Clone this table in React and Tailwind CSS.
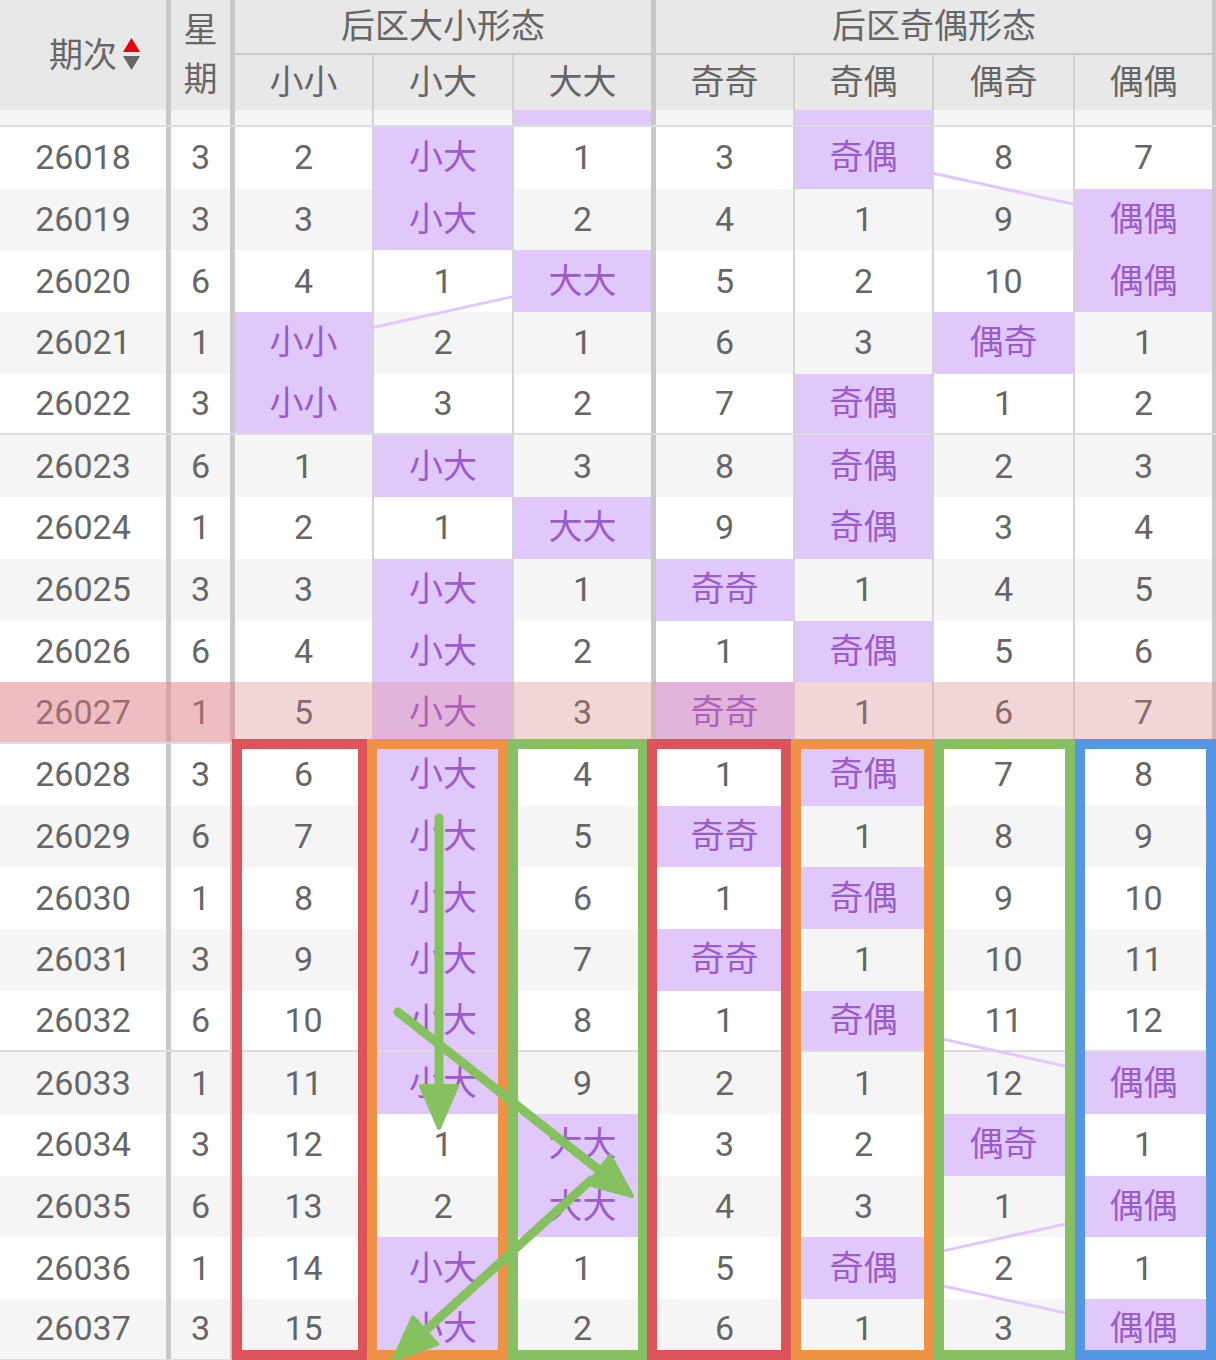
import React from 'react';
import clsx from 'clsx';

const ROW_H = 61.7;
const BODY_TOP = 127;

const SIZE = ['小小', '小大', '大大'];
const PARITY = ['奇奇', '奇偶', '偶奇', '偶偶'];

// [期次, 星期, 大小形态, 奇偶形态]
const draws = [
    ['26018', 3, 1, 1],
    ['26019', 3, 1, 3],
    ['26020', 6, 2, 3],
    ['26021', 1, 0, 2],
    ['26022', 3, 0, 1],
    ['26023', 6, 1, 1],
    ['26024', 1, 2, 1],
    ['26025', 3, 1, 0],
    ['26026', 6, 1, 1],
    ['26027', 1, 1, 0],
    ['26028', 3, 1, 1],
    ['26029', 6, 1, 0],
    ['26030', 1, 1, 1],
    ['26031', 3, 1, 0],
    ['26032', 6, 1, 1],
    ['26033', 1, 1, 3],
    ['26034', 3, 2, 2],
    ['26035', 6, 2, 3],
    ['26036', 1, 1, 1],
    ['26037', 3, 1, 3],
];

// miss counts after 26017
function buildRows() {
    let size = [1, 0, 0];
    let par = [2, 0, 7, 6];
    return draws.map(([issue, week, s, p]) => {
        size = size.map((v, i) => (i === s ? 0 : v + 1));
        par = par.map((v, i) => (i === p ? 0 : v + 1));
        return { issue, week, s, p, size, par };
    });
}

const rows = buildRows();

const SIZE_CELL = [
    'w-[139px] border-r-2 border-[#d4d4d4]',
    'w-[140px] border-r-2 border-[#d4d4d4]',
    'w-[142px] border-r-[5px] border-[#c8c8c8]',
];
const PAR_CELL = [
    'w-[139px] border-r-2 border-[#d4d4d4]',
    'w-[139px] border-r-2 border-[#d4d4d4]',
    'w-[141px] border-r-2 border-[#d4d4d4]',
    'w-[142px] border-r-[5px] border-[#c8c8c8]',
];

// inner fill ranges, used for the connector lines
const SIZE_FILL = [[235, 372], [374, 512], [514, 651]];
const PAR_FILL = [[656, 793], [795, 932], [934, 1073], [1075, 1212]];

function connectors(fills, key) {
    const out = [];
    for (let i = 0; i < rows.length - 1; i++) {
        const a = rows[i][key];
        const b = rows[i + 1][key];
        if (Math.abs(a - b) < 2) continue;
        const c1 = (fills[a][0] + fills[a][1]) / 2;
        const c2 = (fills[b][0] + fills[b][1]) / 2;
        const y1 = BODY_TOP + ROW_H * i + ROW_H / 2;
        const y2 = y1 + ROW_H;
        const xa = a < b ? fills[a][1] : fills[a][0];
        const xb = a < b ? fills[b][0] : fills[b][1];
        const yAt = (x) => y1 + ((x - c1) * (y2 - y1)) / (c2 - c1);
        out.push([xa, yAt(xa), xb, yAt(xb)]);
    }
    return out;
}

const links = [...connectors(SIZE_FILL, 's'), ...connectors(PAR_FILL, 'p')];

const BOXES = [
    [232, 368, '#dc5459'],
    [367, 508, '#ee9345'],
    [508, 648, '#87c062'],
    [647, 791, '#dc5459'],
    [791, 934, '#ee9345'],
    [934, 1075, '#87c062'],
    [1075, 1216, '#5597e4'],
];

const ARROWS = [
    [439, 818, 439, 1128],
    [398, 1012, 632, 1196],
    [591, 1180, 394, 1359],
];

function Arrow({ x1, y1, x2, y2 }) {
    const len = Math.hypot(x2 - x1, y2 - y1);
    const ux = (x2 - x1) / len;
    const uy = (y2 - y1) / len;
    const head = 42;
    const half = 18;
    const bx = x2 - ux * head;
    const by = y2 - uy * head;
    const pts = `${x2},${y2} ${bx - uy * half},${by + ux * half} ${bx + uy * half},${by - ux * half}`;
    return (
        <g>
            <line x1={x1} y1={y1} x2={x2 - ux * 20} y2={y2 - uy * 20} stroke="#86c160" strokeWidth="9" strokeLinecap="round" />
            <polygon points={pts} fill="#86c160" stroke="#86c160" strokeWidth="4" strokeLinejoin="round" />
        </g>
    );
}

function SortIcon() {
    return (
        <svg className="absolute left-[123px] top-[38px]" width="17" height="32" viewBox="0 0 17 32">
            <polygon points="8.5,0 17,14 0,14" fill="#e60012" />
            <polygon points="0,18 17,18 8.5,32" fill="#666" />
        </svg>
    );
}

function Cell({ className, hit, children }) {
    return (
        <div
            className={clsx(
                'flex h-full shrink-0 items-center justify-center',
                className,
                hit && 'bg-[#e0c8fb] text-[#9b5bc8]'
            )}
        >
            {children}
        </div>
    );
}

function Header() {
    return (
        <div className="flex h-[110px] bg-[#e8e8e8]">
            <div className="relative flex w-[171px] shrink-0 items-center justify-center border-r-[5px] border-[#c8c8c8]">
                <span>期次</span>
                <SortIcon />
            </div>
            <div className="flex w-[64px] shrink-0 flex-col items-center justify-center border-r-[5px] border-[#c8c8c8] leading-[49px]">
                <span>星</span>
                <span>期</span>
            </div>
            <div className="flex w-[421px] shrink-0 flex-col border-r-[5px] border-[#c8c8c8]">
                <div className="flex h-[55px] items-center justify-center border-b-2 border-[#c8c8c8]">后区大小形态</div>
                <div className="flex h-[55px]">
                    <div className="flex w-[139px] items-center justify-center border-r-2 border-[#d0d0d0]">小小</div>
                    <div className="flex w-[140px] items-center justify-center border-r-2 border-[#d0d0d0]">小大</div>
                    <div className="flex w-[137px] items-center justify-center">大大</div>
                </div>
            </div>
            <div className="flex w-[561px] shrink-0 flex-col border-r-[5px] border-[#c8c8c8]">
                <div className="flex h-[55px] items-center justify-center border-b-2 border-[#c8c8c8]">后区奇偶形态</div>
                <div className="flex h-[55px]">
                    <div className="flex w-[139px] items-center justify-center border-r-2 border-[#d0d0d0]">奇奇</div>
                    <div className="flex w-[139px] items-center justify-center border-r-2 border-[#d0d0d0]">奇偶</div>
                    <div className="flex w-[141px] items-center justify-center border-r-2 border-[#d0d0d0]">偶奇</div>
                    <div className="flex w-[137px] items-center justify-center">偶偶</div>
                </div>
            </div>
        </div>
    );
}

export default function App() {
    return (
        <div className="relative h-[1360px] w-[1216px] overflow-hidden bg-white font-['Roboto','Noto_Sans_CJK_SC',sans-serif] text-[34px] text-[#666]">
            <Header />

            {/* 26017, mostly scrolled under the header */}
            <div className="flex h-[17px] border-b-2 border-[#dcdcdc] bg-[#f5f5f5]">
                <Cell className="w-[171px] border-r-[5px] border-[#c8c8c8]" />
                <Cell className="w-[64px] border-r-[5px] border-[#c8c8c8]" />
                {SIZE_CELL.map((c, i) => (
                    <Cell key={i} className={c} hit={i === 2} />
                ))}
                {PAR_CELL.map((c, i) => (
                    <Cell key={i} className={c} hit={i === 1} />
                ))}
            </div>

            {rows.map((r, idx) => (
                <div
                    key={r.issue}
                    className={clsx(
                        'relative flex h-[61.7px]',
                        idx % 2 ? 'bg-[#f5f5f5]' : 'bg-white',
                        (idx + 1) % 5 === 0 && 'border-b-2 border-[#dcdcdc]'
                    )}
                >
                    <Cell className="w-[171px] border-r-[5px] border-[#c8c8c8]">{r.issue}</Cell>
                    <Cell className="w-[64px] border-r-[5px] border-[#c8c8c8]">{r.week}</Cell>
                    {SIZE_CELL.map((c, i) => (
                        <Cell key={i} className={c} hit={i === r.s}>
                            {i === r.s ? SIZE[i] : r.size[i]}
                        </Cell>
                    ))}
                    {PAR_CELL.map((c, i) => (
                        <Cell key={i} className={c} hit={i === r.p}>
                            {i === r.p ? PARITY[i] : r.par[i]}
                        </Cell>
                    ))}
                    {r.issue === '26027' && (
                        <>
                            <div className="absolute inset-0 bg-[#e97880]/25" />
                            <div className="absolute bottom-0 left-0 top-0 w-[235px] bg-[#e97880]/25" />
                        </>
                    )}
                </div>
            ))}

            <svg className="pointer-events-none absolute left-0 top-0" width="1216" height="1360">
                {links.map(([x1, y1, x2, y2], i) => (
                    <line key={i} x1={x1} y1={y1} x2={x2} y2={y2} stroke="#e0c8fb" strokeWidth="3" />
                ))}
                {BOXES.map(([x0, x1, color], i) => (
                    <rect key={i} x={x0 + 5} y={744} width={x1 - x0 - 10} height={611} fill="none" stroke={color} strokeWidth="10" />
                ))}
                {ARROWS.map(([x1, y1, x2, y2], i) => (
                    <Arrow key={i} x1={x1} y1={y1} x2={x2} y2={y2} />
                ))}
            </svg>
        </div>
    );
}
